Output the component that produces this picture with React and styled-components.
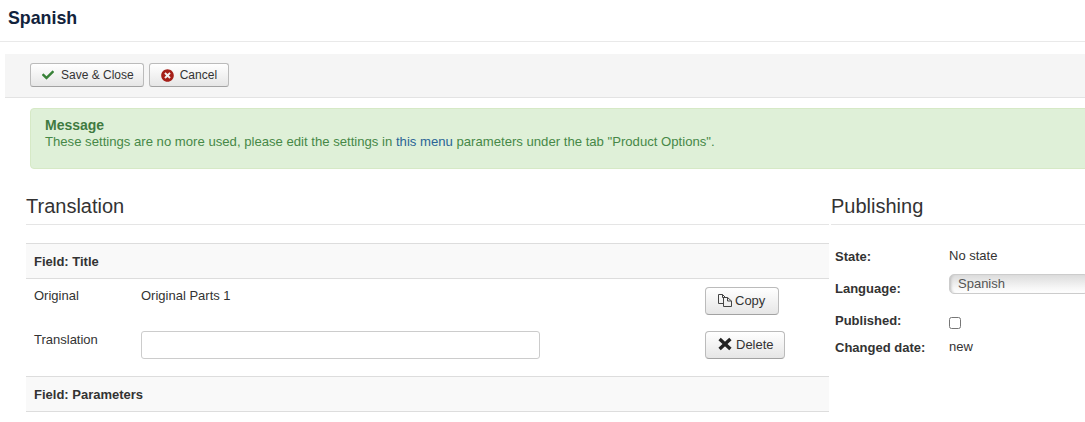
import { createGlobalStyle } from 'styled-components';
import styled from 'styled-components';
import { FaCheck, FaTimesCircle } from 'react-icons/fa';

const GlobalStyle = createGlobalStyle`
    html, body {
        margin: 0;
        padding: 0;
        background: #fff;
        overflow: hidden;
    }
    body {
        font-family: "Liberation Sans", Arial, sans-serif;
        font-size: 13px;
        color: #333;
    }
`

function CopyIcon() {
    return (
        <svg width="16" height="14" viewBox="0 0 16 14" fill="none" stroke="#444" strokeWidth="1">
            <path d="M6.5 10.5H1.5V1.5H5.5L8.5 4.5" />
            <path d="M5.5 1.5V4.5H8.5" />
            <path d="M6.5 4.5H10.5L14.5 8V13.5H6.5Z" />
            <path d="M10.5 4.5V8H14.5" />
        </svg>
    )
}

function CrossIcon() {
    return (
        <svg width="16" height="14" viewBox="0 0 16 14" fill="none" stroke="#222" strokeWidth="3.4">
            <path d="M2.6 2L13.4 12M13.4 2L2.6 12" />
        </svg>
    )
}

export default function App() {
    return (
        <Page>
            <GlobalStyle />
            <Header>
                <Title>Spanish</Title>
            </Header>
            <Toolbar>
                <ToolButton $gap={7} $right={9}>
                    <FaCheck size={12} color="#378137" />
                    Save &amp; Close
                </ToolButton>
                <ToolButton $gap={6} $right={11}>
                    <FaTimesCircle size={13} color="#a51f18" />
                    Cancel
                </ToolButton>
            </Toolbar>
            <Alert>
                <AlertTitle>Message</AlertTitle>
                <AlertText>
                    These settings are no more used, please edit the settings in <AlertLink>this menu</AlertLink> parameters under the tab "Product Options".
                </AlertText>
            </Alert>
            <Columns>
                <Main>
                    <Legend>Translation</Legend>
                    <FieldHeader>Field: Title</FieldHeader>
                    <OriginalRow>
                        <span>Original</span>
                        <span>Original Parts 1</span>
                        <RowButton $gap={2} $right={13}>
                            <CopyIcon />
                            Copy
                        </RowButton>
                    </OriginalRow>
                    <TranslationRow>
                        <span>Translation</span>
                        <TextInput type="text" />
                        <RowButton $gap={3} $right={10}>
                            <CrossIcon />
                            Delete
                        </RowButton>
                    </TranslationRow>
                    <FieldHeader>Field: Parameters</FieldHeader>
                </Main>
                <Side>
                    <Legend>Publishing</Legend>
                    <Details>
                        <Label>State:</Label>
                        <Value>No state</Value>
                        <Label>Language:</Label>
                        <SelectBox>Spanish</SelectBox>
                        <Label>Published:</Label>
                        <Check type="checkbox" />
                        <Label>Changed date:</Label>
                        <Value>new</Value>
                    </Details>
                </Side>
            </Columns>
        </Page>
    )
}

const Page = styled.div`
    width: 1085px;
    height: 422px;
    overflow: hidden;
`
const Header = styled.header`
    height: 41px;
    padding-left: 8px;
    border-bottom: 1px solid #e9e9e9;
    box-sizing: content-box;
`
const Title = styled.h1`
    margin: 0;
    font-size: 17.8px;
    line-height: 36px;
    font-weight: 700;
    color: #12233c;
`
const Toolbar = styled.div`
    margin: 12px 0 0 5px;
    height: 44px;
    padding: 9px 0 0 25px;
    box-sizing: border-box;
    display: flex;
    gap: 5px;
    background: #f5f5f5;
    border-bottom: 1px solid #e3e3e3;
`
const ToolButton = styled.button`
    height: 24px;
    padding: 0 ${(props) => props.$right}px 0 11px;
    display: flex;
    align-items: center;
    gap: ${(props) => props.$gap}px;
    font: 12px "Liberation Sans", Arial, sans-serif;
    color: #333;
    background: linear-gradient(#fff, #e6e6e6);
    border: 1px solid #bbb;
    border-bottom-color: #a2a2a2;
    border-radius: 3px;
`
const Alert = styled.div`
    margin: 10px -40px 0 30px;
    height: 61px;
    box-sizing: border-box;
    padding: 9px 14px;
    background: #dff0d8;
    border: 1px solid #d6e9c6;
    border-radius: 4px;
    color: #468847;
`
const AlertTitle = styled.h4`
    margin: 0;
    font-size: 14px;
    line-height: 15px;
    font-weight: 700;
    color: #3f7a41;
`
const AlertText = styled.div`
    font-size: 13.14px;
    line-height: 18px;
`
const AlertLink = styled.span`
    color: #2a6496;
`
const Columns = styled.div`
    display: flex;
    margin: 23px 0 0 26px;
    gap: 2px;
`
const Main = styled.div`
    width: 803px;
    flex-shrink: 0;
`
const Side = styled.div`
    width: 300px;
    flex-shrink: 0;
`
const Legend = styled.div`
    height: 32px;
    line-height: 28px;
    font-size: 20px;
    color: #333;
    border-bottom: 1px solid #e5e5e5;
`
const FieldHeader = styled.div`
    height: 34px;
    margin-top: 18px;
    padding-left: 8px;
    line-height: 35px;
    font-size: 13px;
    font-weight: 700;
    color: #333;
    background: #f9f9f9;
    border-top: 1px solid #ddd;
    border-bottom: 1px solid #ddd;
`
const Row = styled.div`
    display: grid;
    grid-template-columns: 107px 564px auto;
    justify-items: start;
    padding-left: 8px;
`
const OriginalRow = styled(Row)`
    height: 52px;
    padding-top: 8px;
    box-sizing: border-box;
    line-height: 18px;
`
const TranslationRow = styled(Row)`
    line-height: 18px;
    margin-bottom: -1px;
`
const RowButton = styled.button`
    height: 28px;
    padding: 0 ${(props) => props.$right}px 2px 11px;
    display: flex;
    align-items: center;
    gap: ${(props) => props.$gap}px;
    font: 13px "Liberation Sans", Arial, sans-serif;
    color: #333;
    background: linear-gradient(#fff, #e6e6e6);
    border: 1px solid #bbb;
    border-bottom-color: #a2a2a2;
    border-radius: 4px;
`
const TextInput = styled.input`
    width: 399px;
    height: 28px;
    box-sizing: border-box;
    background: #fff;
    border: 1px solid #ccc;
    border-radius: 3px;
`
const Details = styled.div`
    display: grid;
    grid-template-columns: 114px 140px;
    grid-template-rows: 32px 32px 32px 22px;
    align-items: center;
    justify-items: start;
    padding: 14px 0 0 4px;
`
const Label = styled.div`
    padding-top: 2px;
    font-weight: 700;
    font-size: 13px;
`
const Value = styled.div`
    font-size: 13px;
`
const SelectBox = styled.div`
    width: 140px;
    height: 20px;
    margin-bottom: 6px;
    line-height: 18px;
    box-sizing: border-box;
    padding-left: 8px;
    font-size: 13px;
    color: #555;
    background: linear-gradient(#dcdcdc, #f6f6f6 70%, #fff);
    border: 1px solid #ccc;
    border-radius: 5px;
    box-shadow: inset 3px 0 3px -2px #bbb;
`
const Check = styled.input`
    margin: 8px 0 0;
    width: 12px;
    height: 12px;
`
